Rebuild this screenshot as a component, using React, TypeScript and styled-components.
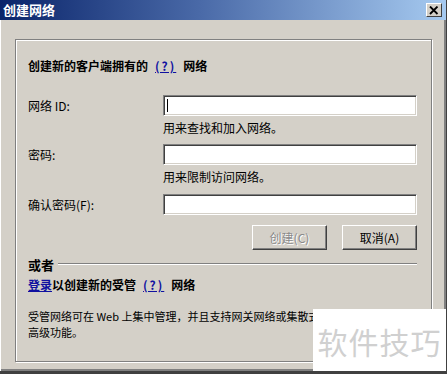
import React from "react";
import styled, { createGlobalStyle } from "styled-components";

const Global = createGlobalStyle`
  html, body {
    margin: 0;
    padding: 0;
    background: #d4d0c8;
    overflow: hidden;
  }
  * {
    box-sizing: border-box;
  }
`;

const Window = styled.div`
  position: relative;
  width: 447px;
  height: 374px;
  background: #d4d0c8;
  display: flex;
  flex-direction: column;
  font-family: "Noto Sans CJK SC", "Liberation Sans", sans-serif;
  font-size: 12px;
  color: #000;
  border-right: 1px solid #404040;
  border-bottom: 3px solid #404040;
  box-shadow: inset -2px -2px 0 #808080;
  overflow: hidden;
`;

const TitleBar = styled.div`
  height: 20px;
  display: flex;
  align-items: center;
  justify-content: space-between;
  padding: 0 4px 0 3px;
  background: linear-gradient(to right, #0a246a 0%, #4a6aa8 45%, #a6caf0 100%);
`;

const Title = styled.span`
  color: #fff;
  font-weight: bold;
  font-size: 13px;
  line-height: 20px;
`;

const CloseButton = styled.div`
  width: 16px;
  height: 14px;
  background: #d4d0c8;
  border: 1px solid;
  border-color: #fff #404040 #404040 #fff;
  display: flex;
  align-items: center;
  justify-content: center;
`;

const Body = styled.div`
  flex: 1;
  padding: 19px 14px 9px 14px;
  border-left: 1px solid #fff;
  display: flex;
`;

const Panel = styled.div`
  flex: 1;
  border: 1px solid #808080;
  box-shadow: inset 1px 1px 0 #fff, 1px 1px 0 #fff;
  padding: 18px 14px 0 12px;
  display: flex;
  flex-direction: column;
`;

const Heading = styled.div`
  font-weight: bold;
  line-height: 16px;
  height: 16px;
  white-space: nowrap;
`;

const Link = styled.span<{ $gap?: number }>`
  color: #1010a0;
  text-decoration: underline;
  letter-spacing: ${(p) => (p.$gap ? 2 : 0)}px;
  margin: 0 ${(p) => p.$gap ?? 0}px;
`;

const Form = styled.div`
  margin-top: 21px;
  display: flex;
  flex-direction: column;
`;

const Row = styled.div<{ $top: number }>`
  display: flex;
  align-items: center;
  margin-top: ${(p) => p.$top}px;
`;

const Label = styled.span`
  width: 135px;
  line-height: 21px;
  white-space: nowrap;
`;

const Field = styled.div`
  flex: 1;
  height: 21px;
  background: #fff;
  border: 1px solid;
  border-color: #808080 #fff #fff #808080;
  box-shadow: inset 1px 1px 0 #404040, inset -1px -1px 0 #d4d0c8;
  padding: 3px 0 3px 3px;
  display: flex;
`;

const Caret = styled.span`
  width: 1px;
  background: #000;
`;

const Hint = styled.div`
  margin: 4px 0 0 135px;
  line-height: 16px;
  white-space: nowrap;
`;

const Buttons = styled.div`
  margin-top: 10px;
  display: flex;
  justify-content: flex-end;
  gap: 15px;
`;

const Button = styled.div<{ $disabled?: boolean }>`
  width: 75px;
  height: 25px;
  display: flex;
  align-items: center;
  justify-content: center;
  background: #d4d0c8;
  border: 1px solid;
  border-color: #fff #404040 #404040 #fff;
  box-shadow: inset -1px -1px 0 #808080;
  color: ${(p) => (p.$disabled ? "#8a8a8a" : "#000")};
  text-shadow: ${(p) => (p.$disabled ? "1px 1px 0 #fff" : "none")};
`;

const Divider = styled.div`
  margin-top: 7px;
  display: flex;
  align-items: center;
  gap: 4px;
`;

const DividerLabel = styled.span`
  font-weight: bold;
  font-size: 13px;
  line-height: 16px;
`;

const DividerLine = styled.div`
  flex: 1;
  height: 2px;
  margin-top: -2px;
  border-top: 1px solid #808080;
  border-bottom: 1px solid #fff;
`;

const SubHeading = styled(Heading)`
  margin-top: 4px;
`;

const Paragraph = styled.div`
  margin-top: 15px;
  font-size: 11px;
  line-height: 16px;
  white-space: nowrap;
`;

const Watermark = styled.div`
  position: absolute;
  left: 313px;
  top: 309px;
  right: 0;
  bottom: 0;
  background: #fff;
  display: flex;
  justify-content: center;
  padding-top: 14px;
  color: #d0d0d0;
  font-size: 30px;
  line-height: 36px;
  letter-spacing: 1px;
  font-family: "Noto Sans CJK SC", sans-serif;
`;

export default function App() {
  return (
    <>
      <Global />
      <Window>
        <TitleBar>
          <Title>创建网络</Title>
          <CloseButton>
            <svg width="10" height="9" viewBox="0 0 10 9">
              <path d="M1 0.5 L8.5 8 M8.5 0.5 L1 8" stroke="#000" strokeWidth="1.8" />
            </svg>
          </CloseButton>
        </TitleBar>
        <Body>
          <Panel>
            <Heading>
              创建新的客户端拥有的<Link $gap={7}>(?)</Link>网络
            </Heading>
            <Form>
              <Row $top={0}>
                <Label>网络 ID:</Label>
                <Field>
                  <Caret />
                </Field>
              </Row>
              <Hint>用来查找和加入网络。</Hint>
              <Row $top={8}>
                <Label>密码:</Label>
                <Field />
              </Row>
              <Hint>用来限制访问网络。</Hint>
              <Row $top={9}>
                <Label>确认密码(F):</Label>
                <Field />
              </Row>
            </Form>
            <Buttons>
              <Button $disabled>创建(C)</Button>
              <Button>取消(A)</Button>
            </Buttons>
            <Divider>
              <DividerLabel>或者</DividerLabel>
              <DividerLine />
            </Divider>
            <SubHeading>
              <Link>登录</Link>以创建新的受管<Link $gap={7}>(?)</Link>网络
            </SubHeading>
            <Paragraph>
              受管网络可在 Web 上集中管理，并且支持网关网络或集散式网络等
              <br />
              高级功能。
            </Paragraph>
          </Panel>
        </Body>
        <Watermark>软件技巧</Watermark>
      </Window>
    </>
  );
}
